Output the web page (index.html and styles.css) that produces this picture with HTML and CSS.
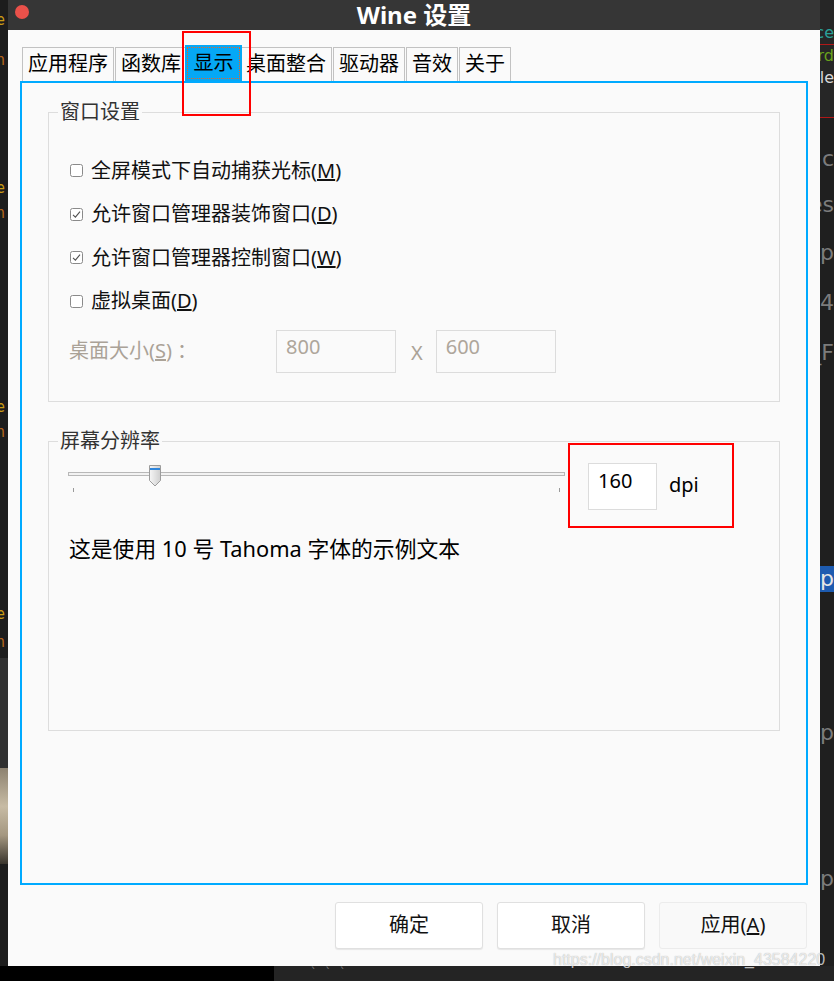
FILE: index.html
```html
<!DOCTYPE html>
<html lang="zh-CN">
<head>
<meta charset="utf-8">
<title>Wine 设置</title>
<link rel="stylesheet" href="styles.css">
</head>
<body>
<div class="screen">
  <div class="side-left">
    <span class="yb y1">e</span>
    <span class="yb y2">n</span>
    <span class="yb y3">e</span>
    <span class="yb y4">n</span>
    <span class="yb y5">e</span>
    <span class="yb y6">n</span>
    <span class="yb y7">e</span>
    <span class="yb y8">n</span>
    <div class="left-grey"></div>
    <div class="left-photo"></div>
  </div>

  <div class="window">
    <div class="titlebar">
      <div class="tb-left"><span class="close"></span></div>
      <div class="title">Wine 设置</div>
      <div class="tb-right"></div>
    </div>
    <div class="client">
      <div class="tabs">
        <div class="tab">应用程序</div>
        <div class="tab">函数库</div>
        <div class="tab active">显示</div>
        <div class="tab">桌面整合</div>
        <div class="tab">驱动器</div>
        <div class="tab">音效</div>
        <div class="tab">关于</div>
      </div>
      <div class="panel">
        <fieldset class="group g1">
          <legend>窗口设置</legend>
          <div class="check-row">
            <svg class="cb" width="13" height="13" viewBox="0 0 13 13"><rect x="0.5" y="0.5" width="12" height="12" rx="2" fill="#fff" stroke="#8a8a8a"/></svg>
            <span>全屏模式下自动捕获光标(<u>M</u>)</span>
          </div>
          <div class="check-row">
            <svg class="cb" width="13" height="13" viewBox="0 0 13 13"><rect x="0.5" y="0.5" width="12" height="12" rx="2" fill="#fff" stroke="#8a8a8a"/><path d="M3 6.8 L5.4 9.2 L10 3.6" fill="none" stroke="#505050" stroke-width="1.1"/></svg>
            <span>允许窗口管理器装饰窗口(<u>D</u>)</span>
          </div>
          <div class="check-row">
            <svg class="cb" width="13" height="13" viewBox="0 0 13 13"><rect x="0.5" y="0.5" width="12" height="12" rx="2" fill="#fff" stroke="#8a8a8a"/><path d="M3 6.8 L5.4 9.2 L10 3.6" fill="none" stroke="#505050" stroke-width="1.1"/></svg>
            <span>允许窗口管理器控制窗口(<u>W</u>)</span>
          </div>
          <div class="check-row">
            <svg class="cb" width="13" height="13" viewBox="0 0 13 13"><rect x="0.5" y="0.5" width="12" height="12" rx="2" fill="#fff" stroke="#8a8a8a"/></svg>
            <span>虚拟桌面(<u>D</u>)</span>
          </div>
          <div class="size-row">
            <span class="size-label">桌面大小(<u>S</u>)<span class="cjk">：</span></span>
            <div class="field disabled">800</div>
            <span class="times">X</span>
            <div class="field disabled">600</div>
          </div>
        </fieldset>

        <fieldset class="group g2">
          <legend>屏幕分辨率</legend>
          <div class="dpi-row">
            <div class="slider">
              <div class="track"></div>
              <div class="ticks"><span class="tick"></span><span class="tick"></span></div>
              <svg class="thumb" width="12" height="22" viewBox="0 0 12 22">
                <defs>
                  <linearGradient id="tg" x1="0" y1="0" x2="1" y2="0">
                    <stop offset="0" stop-color="#f6f6f6"/>
                    <stop offset="1" stop-color="#cfcfcf"/>
                  </linearGradient>
                </defs>
                <path d="M0.5 0.5 H11.5 V15.5 L6 21 L0.5 15.5 Z" fill="url(#tg)" stroke="#9c9c9c"/>
                <rect x="1" y="3" width="10" height="2" fill="#2f86dc"/>
              </svg>
            </div>
            <div class="field dpi-field">160</div>
            <span class="dpi-unit">dpi</span>
          </div>
          <p class="sample">这是使用 10 号 Tahoma 字体的示例文本</p>
        </fieldset>
      </div>
      <div class="buttons">
        <div class="btn">确定</div>
        <div class="btn">取消</div>
        <div class="btn apply">应用(<u>A</u>)</div>
      </div>
    </div>
  </div>

  <div class="side-right">
    <div class="rtop">
      <div class="rl teal">ace</div>
      <div class="rl green">rd</div>
      <div class="rl white">file</div>
    </div>
    <div class="rl big c1">c</div>
    <div class="rl big c2">es</div>
    <div class="rl big c3">'p</div>
    <div class="rl big c4">4</div>
    <div class="rl big c5">_F</div>
    <div class="rl big sel">ep</div>
    <div class="rl big c6">ep</div>
    <div class="rl big c7">ep</div>
  </div>

  <div class="bottom">
    <div class="bottom-black"></div>
    <div class="bottom-dark"><span class="ticks-text">` ` `</span></div>
  </div>
</div>

<div class="annot annot-tab"></div>
<div class="annot annot-dpi"></div>
<div class="watermark">https://blog.csdn.net/weixin_43584220</div>
</body>
</html>
```

FILE: styles.css
```css
* { box-sizing: border-box; }

html, body {
  margin: 0;
  padding: 0;
}

body {
  width: 834px;
  height: 981px;
  overflow: hidden;
  position: relative;
  background: #1e1e1e;
  font-family: "Noto Sans", "Noto Sans CJK SC", sans-serif;
  color: #111;
}

.screen {
  display: grid;
  grid-template-columns: 8px 812px 14px;
  grid-template-rows: 966px 15px;
}

/* ---------- desktop strips ---------- */
.side-left {
  background: #1d1d1d;
  display: flex;
  flex-direction: column;
  overflow: hidden;
  font-family: "DejaVu Sans Mono", monospace;
  font-size: 15px;
  line-height: 16px;
}
.yb { color: #c99a14; margin-left: -4px; display: block; height: 16px; }
.y1 { margin-top: 12px; }
.y2 { margin-top: 24px; color: #b5651b; }
.y3 { margin-top: 112px; }
.y4 { margin-top: 9px; color: #b5651b; }
.y5 { margin-top: 178px; }
.y6 { margin-top: 9px; color: #b5651b; }
.y7 { margin-top: 166px; }
.y8 { margin-top: 12px; color: #b5651b; }
.left-grey { height: 110px; margin-top: 8px; background: #303030; }
.left-photo {
  height: 96px;
  background: linear-gradient(180deg, #8d8270, #c7bba4 40%, #a49780 70%, #3a352d);
}

.side-right {
  background: #1f1f1f;
  display: flex;
  flex-direction: column;
  overflow: hidden;
  font-family: "DejaVu Sans", sans-serif;
}
.rtop {
  height: 118px;
  background: #262626;
  border-bottom: 1px solid #b01818;
  display: flex;
  flex-direction: column;
  padding-top: 22px;
}
.rl {
  display: flex;
  justify-content: flex-end;
  white-space: nowrap;
  overflow: hidden;
}
.rtop .rl { font-size: 16px; line-height: 22px; }
.teal { color: #2aa198; }
.green { color: #6aa31c; border-top: 1px solid #b01818; }
.white { color: #d8d8d8; }
.big { font-size: 22px; line-height: 26px; color: #7c7c7c; }
.c1 { margin-top: 28px; }
.c2 { margin-top: 20px; }
.c3 { margin-top: 22px; }
.c4 { margin-top: 24px; }
.c5 { margin-top: 24px; }
.sel { margin-top: 200px; background: #1d5bb0; color: #e6e6e6; }
.c6 { margin-top: 128px; }
.c7 { margin-top: 120px; }

.bottom {
  grid-column: 1 / 4;
  display: flex;
}
.bottom-black { width: 274px; background: #000; }
.bottom-dark {
  flex: 1;
  background: #242424;
  padding-left: 36px;
  font-size: 12px;
  line-height: 15px;
  color: #777;
  font-family: "DejaVu Sans Mono", monospace;
}

/* ---------- window ---------- */
.window {
  display: flex;
  flex-direction: column;
}

.titlebar {
  height: 30px;
  background: #363636;
  display: grid;
  grid-template-columns: 1fr auto 1fr;
  align-items: center;
}
.tb-left { padding-left: 7px; display: flex; align-items: center; padding-bottom: 8px; }
.close {
  width: 14px;
  height: 14px;
  border-radius: 50%;
  background: #ea514a;
}
.title {
  color: #fff;
  font-weight: bold;
  font-size: 24px;
  line-height: 30px;
  padding-bottom: 2px;
}

.client {
  flex: 1;
  background: #fafafa;
  padding: 15px 0 0 12px;
  display: flex;
  flex-direction: column;
}

/* tabs */
.tabs {
  display: flex;
  align-items: flex-end;
  height: 36px;
  margin-left: 2px;
}
.tab {
  height: 34px;
  padding: 0 5px 2px;
  margin-right: 1px;
  border: 1px solid #c2c2c2;
  border-bottom: none;
  background: #fafafa;
  font-size: 20px;
  line-height: 31px;
  color: #000;
  white-space: nowrap;
}
.tab.active {
  height: 36px;
  padding: 0 7.5px 2px;
  margin-left: -3px;
  margin-right: -2px;
  background: #05a8f5;
  border-color: #05a8f5;
  outline: 1px dotted #e2662a;
  outline-offset: -3px;
  position: relative;
  z-index: 1;
  line-height: 33px;
}

/* panel */
.panel {
  width: 788px;
  height: 804px;
  border: 2px solid #00aaff;
  padding: 0 26px;
}

.group {
  margin: 0;
  border: 1px solid #dddddd;
  padding: 0 0 0 20px;
  min-width: 0;
}
.group legend {
  margin-left: -11px;
  padding: 0 2px;
  font-size: 20px;
  line-height: 24px;
  color: #333;
}
.g1 {
  margin-top: 17px;
  padding-top: 25px;
  padding-bottom: 28px;
}
.g2 {
  margin-top: 27px;
  height: 302px;
  padding-top: 10px;
}

.check-row {
  height: 43.5px;
  display: flex;
  align-items: center;
  gap: 8px;
  font-size: 20px;
  line-height: 24px;
}
.cb { margin-left: 1px; flex: none; }

.size-row {
  margin-top: 7px;
  display: flex;
  align-items: center;
  font-size: 20px;
  line-height: 24px;
  color: #aaa297;
}
.size-label { width: 207px; padding-bottom: 2px; }
.cjk { font-family: "Noto Sans CJK TC", "Noto Sans CJK JP", sans-serif; margin-left: 5px; }
.field {
  height: 43px;
  width: 120px;
  border: 1px solid #dcdcdc;
  padding: 4px 0 0 9px;
  font-size: 20px;
  line-height: 24px;
}
.field.disabled { background: #fafafa; color: #aea69b; }
.times { margin: 0 13px 0 15px; padding-top: 3px; }

.dpi-row {
  display: flex;
  align-items: flex-start;
}
.slider {
  position: relative;
  width: 497px;
  height: 30px;
  margin-left: -1px;
  margin-right: 23px;
}
.track {
  margin-top: 9px;
  height: 4px;
  border: 1px solid #b8b8b8;
  background: #f2f2f2;
}
.ticks {
  margin-top: 12px;
  padding: 0 5px;
  display: flex;
  justify-content: space-between;
}
.tick { width: 1px; height: 4px; background: #9a9a9a; }
.thumb { position: absolute; left: 81px; top: 2px; }

.dpi-field {
  width: 69px;
  height: 47px;
  background: #fff;
  color: #000;
  padding-left: 9px;
  padding-top: 5px;
}
.dpi-unit {
  margin-left: 12px;
  margin-top: 10px;
  font-size: 20px;
  line-height: 24px;
  color: #000;
}

.sample {
  margin: 24px 0 0;
  font-size: 21.8px;
  line-height: 30px;
  color: #000;
}

/* buttons */
.buttons {
  width: 788px;
  margin-top: 17px;
  padding-right: 1px;
  display: flex;
  justify-content: flex-end;
  gap: 14px;
}
.btn {
  width: 148px;
  height: 47px;
  background: #fff;
  border: 1px solid #e0e0e0;
  border-radius: 3px;
  box-shadow: 0 1px 1px rgba(0, 0, 0, 0.08);
  display: flex;
  align-items: center;
  justify-content: center;
  font-size: 20px;
  line-height: 24px;
  color: #111;
  padding-bottom: 2px;
}
.btn.apply {
  background: #f9f9f9;
  border-color: #ececec;
  box-shadow: none;
}

/* ---------- overlays ---------- */
.annot {
  position: absolute;
  border: 2px solid #ff0000;
}
.annot-tab { left: 182px; top: 31px; width: 69px; height: 85px; }
.annot-dpi { left: 568px; top: 443px; width: 166px; height: 85px; }

.watermark {
  position: absolute;
  left: 553px;
  top: 951px;
  font-family: "Liberation Sans", Arial, sans-serif;
  font-size: 16px;
  line-height: 18px;
  color: rgba(255, 255, 255, 0.72);
  text-shadow: 0 0 1px rgba(0, 0, 0, 0.35);
  white-space: nowrap;
}
```
